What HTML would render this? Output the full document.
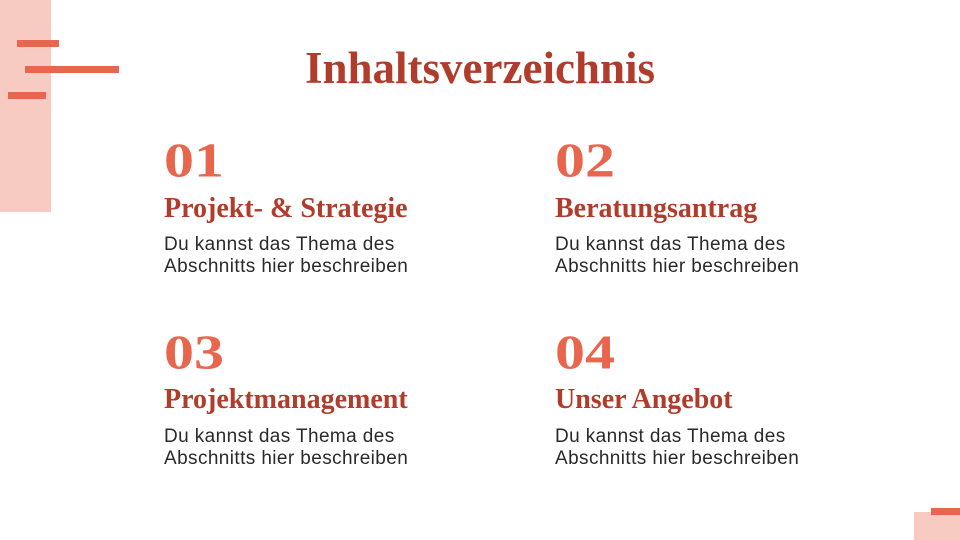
<!DOCTYPE html>
<html><head><style>
body{margin:0;width:960px;height:540px;position:relative;background:#fff;overflow:hidden;font-family:"Liberation Sans",sans-serif}
.a{position:absolute}
.num{position:absolute;font-family:"Liberation Serif",serif;font-weight:bold;color:#e8664e;font-size:60px;line-height:1;transform:scaleY(0.82);transform-origin:0 90%}
.h{position:absolute;font-family:"Liberation Serif",serif;font-weight:bold;color:#b03c2c;font-size:28px;line-height:1;white-space:nowrap}
.p{position:absolute;color:#2a2a2a;font-size:19px;letter-spacing:0.4px;line-height:22px;white-space:nowrap}
</style></head><body>
<div class="a" style="left:0;top:0;width:51px;height:212px;background:#f7cbc2"></div>
<div class="a" style="left:17px;top:40px;width:42px;height:7px;background:#e8664e"></div>
<div class="a" style="left:25px;top:66px;width:94px;height:7px;background:#e8664e"></div>
<div class="a" style="left:8px;top:92px;width:38px;height:7px;background:#e8664e"></div>
<div class="a" style="left:914px;top:512px;width:46px;height:28px;background:#f7cbc2"></div>
<div class="a" style="left:931px;top:508px;width:29px;height:7px;background:#e8664e"></div>
<div class="a" style="left:0;width:960px;top:44px;text-align:center;font-family:'Liberation Serif',serif;font-weight:bold;color:#b03c2c;font-size:45px;line-height:48px">Inhaltsverzeichnis</div>

<div class="num" style="left:164px;top:126px">01</div>
<div class="h" style="left:164px;top:195px">Projekt- &amp; Strategie</div>
<div class="p" style="left:164px;top:234px">Du kannst das Thema des<br>Abschnitts hier beschreiben</div>

<div class="num" style="left:555px;top:126px">02</div>
<div class="h" style="left:555px;top:195px">Beratungsantrag</div>
<div class="p" style="left:555px;top:234px">Du kannst das Thema des<br>Abschnitts hier beschreiben</div>

<div class="num" style="left:164px;top:318px">03</div>
<div class="h" style="left:164px;top:386px">Projektmanagement</div>
<div class="p" style="left:164px;top:426px">Du kannst das Thema des<br>Abschnitts hier beschreiben</div>

<div class="num" style="left:555px;top:318px">04</div>
<div class="h" style="left:555px;top:386px">Unser Angebot</div>
<div class="p" style="left:555px;top:426px">Du kannst das Thema des<br>Abschnitts hier beschreiben</div>
</body></html>
